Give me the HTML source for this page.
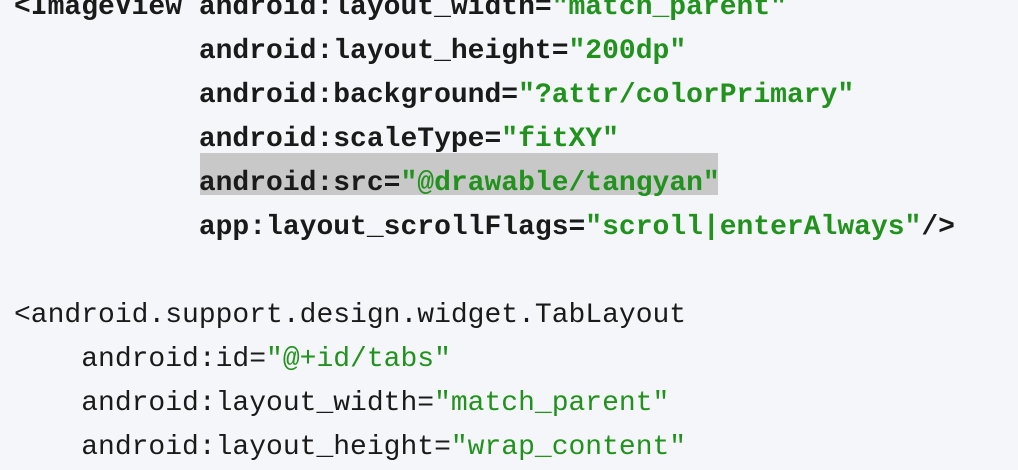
<!DOCTYPE html>
<html><head><style>
html,body{margin:0;padding:0;background:#f4f6f9;width:1018px;height:438px;overflow:hidden}
pre{position:absolute;left:14px;top:-14px;margin:0;font-family:"Liberation Mono",monospace;font-size:28px;line-height:44px;color:#1a1a1a;white-space:pre}
.s{color:#21921d}
.b{font-weight:bold}
</style></head><body>
<div style="position:absolute;left:200px;top:153px;width:518px;height:42px;background:#c8c8c8"></div>
<pre><span class="b">&lt;ImageView android:layout_width=<span class="s">"match_parent"</span>
           android:layout_height=<span class="s">"200dp"</span>
           android:background=<span class="s">"?attr/colorPrimary"</span>
           android:scaleType=<span class="s">"fitXY"</span>
           android:src=<span class="s">"@drawable/tangyan"</span>
           app:layout_scrollFlags=<span class="s">"scroll|enterAlways"</span>/&gt;</span>

&lt;android.support.design.widget.TabLayout
    android:id=<span class="s">"@+id/tabs"</span>
    android:layout_width=<span class="s">"match_parent"</span>
    android:layout_height=<span class="s">"wrap_content"</span></pre>
</body></html>
